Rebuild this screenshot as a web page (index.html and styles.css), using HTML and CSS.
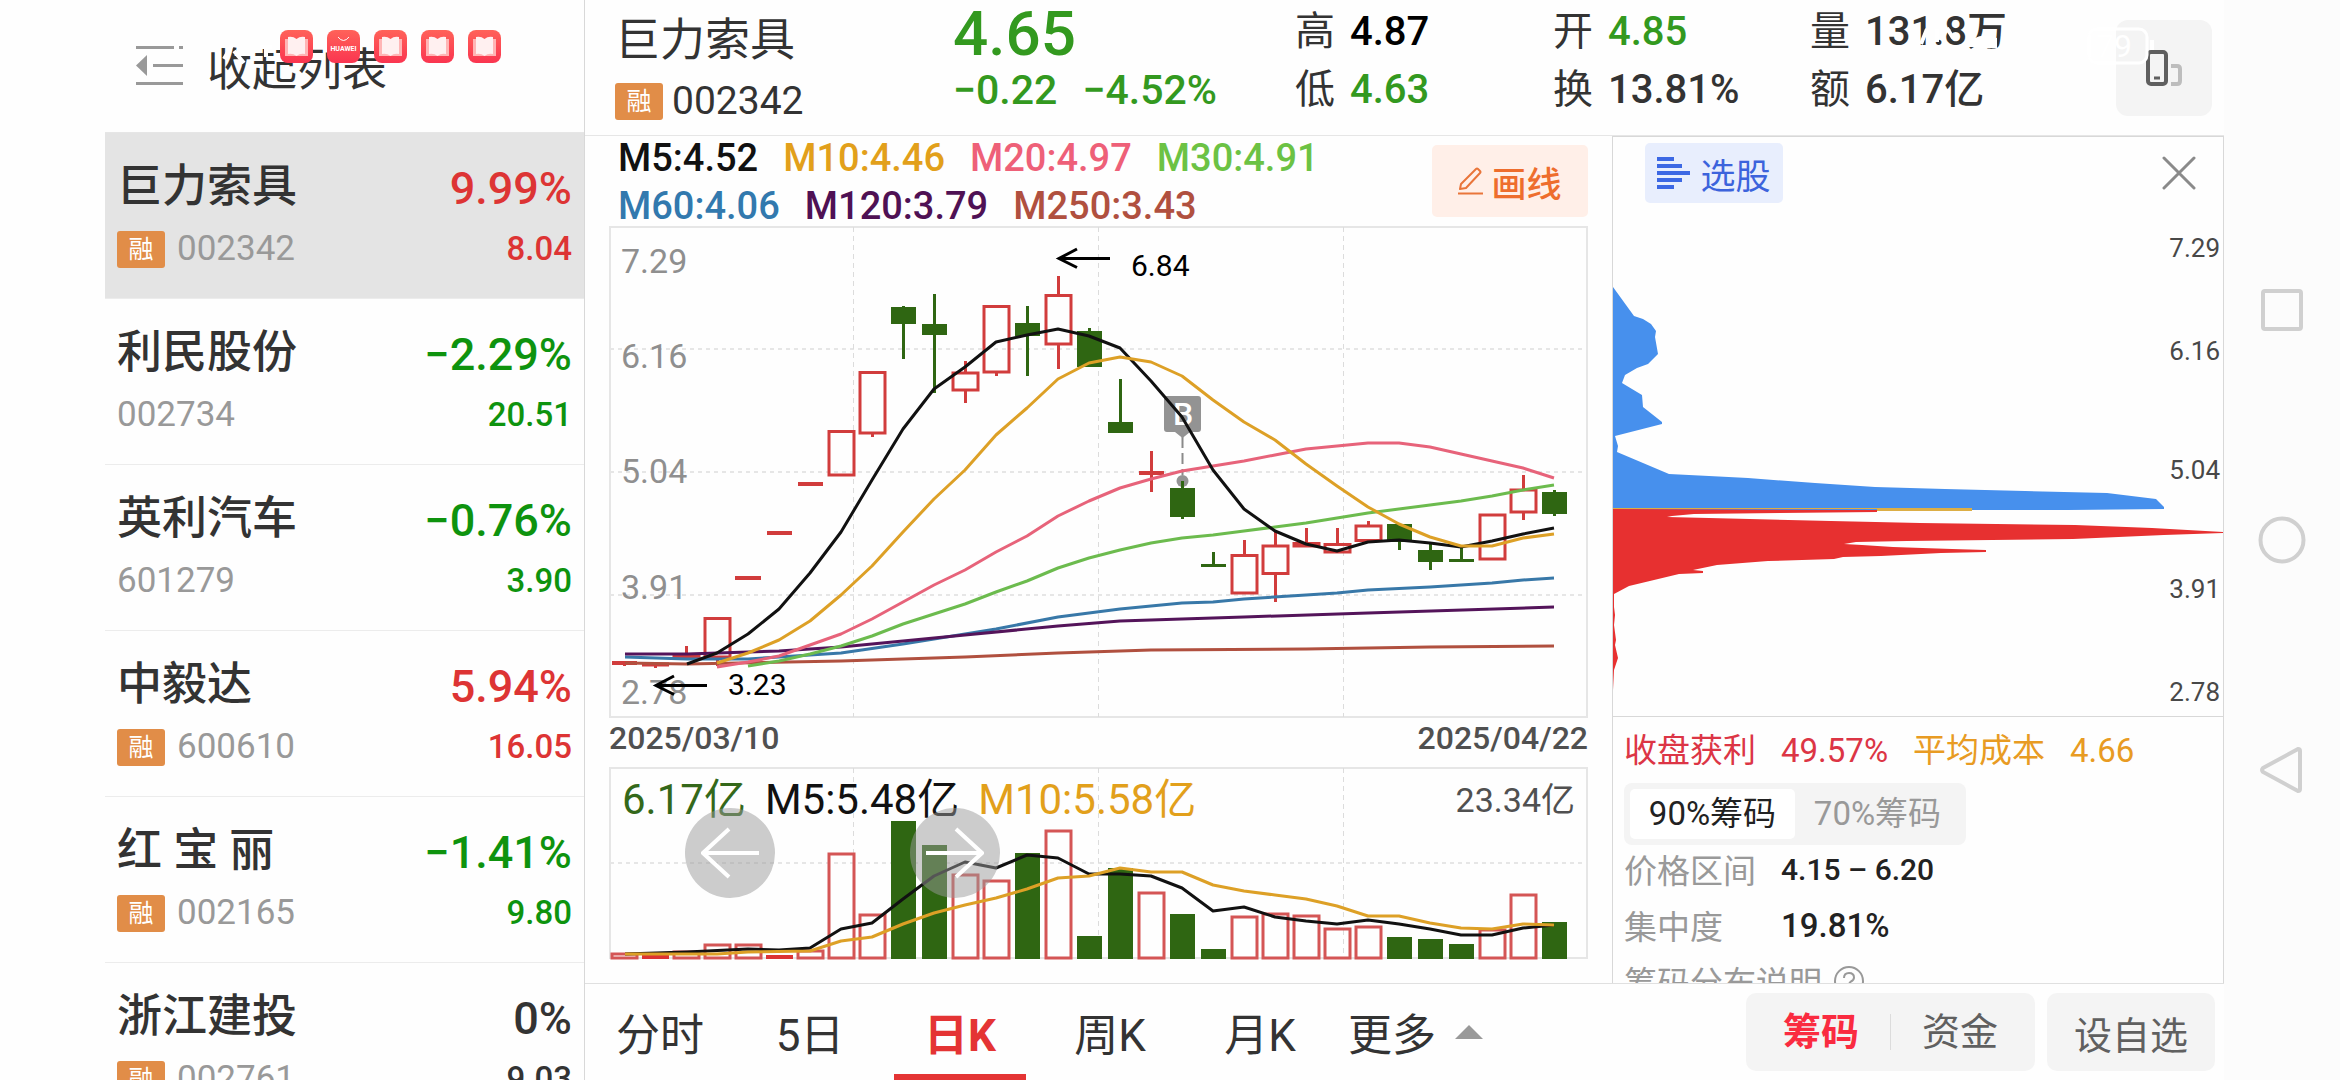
FILE: index.html
```html
<!DOCTYPE html>
<html lang="zh-CN">
<head>
<meta charset="utf-8">
<meta name="viewport" content="width=device-width, initial-scale=1">
<title>巨力索具 002342</title>
<link rel="stylesheet" href="styles.css">
</head>
<body>
<div class="app">
  <aside class="sidebar">
    <button class="collapse" type="button">
      <svg width="47" height="40" viewBox="0 0 47 40" aria-hidden="true"><path d="M0 1.500H38M43 1.500H47M17 19.500H47M0 37.500H47" stroke="#999" stroke-width="3"/><path d="M0 19.500L11 9V30Z" fill="#999"/></svg>
      <span>收起列表</span>
    </button>
    <ul class="stocks">
      <li><a class="stock selected" href="#002342"><span class="name">巨力索具</span><span class="change up">9.99%</span><span class="code"><i class="badge">融</i>002342</span><span class="price up">8.04</span></a></li>
      <li><a class="stock" href="#002734"><span class="name">利民股份</span><span class="change down">−2.29%</span><span class="code">002734</span><span class="price down">20.51</span></a></li>
      <li><a class="stock" href="#601279"><span class="name">英利汽车</span><span class="change down">−0.76%</span><span class="code">601279</span><span class="price down">3.90</span></a></li>
      <li><a class="stock" href="#600610"><span class="name">中毅达</span><span class="change up">5.94%</span><span class="code"><i class="badge">融</i>600610</span><span class="price up">16.05</span></a></li>
      <li><a class="stock" href="#002165"><span class="name">红 宝 丽</span><span class="change down">−1.41%</span><span class="code"><i class="badge">融</i>002165</span><span class="price down">9.80</span></a></li>
      <li><a class="stock" href="#002761"><span class="name">浙江建投</span><span class="change">0%</span><span class="code"><i class="badge">融</i>002761</span><span class="price">9.03</span></a></li>
    </ul>
  </aside>

  <main class="main">
    <header class="quote">
      <div class="identity">
        <h1>巨力索具</h1>
        <p><i class="badge">融</i>002342</p>
      </div>
      <div class="last">
        <strong>4.65</strong>
        <p><span>−0.22</span><span>−4.52%</span></p>
      </div>
      <dl class="stats">
        <div><dt>高</dt><dd class="black">4.87</dd></div>
        <div><dt>低</dt><dd class="fall">4.63</dd></div>
      </dl>
      <dl class="stats">
        <div><dt>开</dt><dd class="fall">4.85</dd></div>
        <div><dt>换</dt><dd>13.81%</dd></div>
      </dl>
      <dl class="stats">
        <div><dt>量</dt><dd>131.8万</dd></div>
        <div><dt>额</dt><dd>6.17亿</dd></div>
      </dl>
      <button class="rotate" type="button" aria-label="切换竖屏">
        <svg width="96" height="96" viewBox="0 0 96 96" fill="none" stroke-width="4" aria-hidden="true">
          <path d="M55 46H61Q64 46 64 49V61Q64 64 61 64H55" stroke="#bdbdbd"/>
          <rect x="32" y="32" width="18" height="32" rx="3" stroke="#5f5f5f"/><path d="M38 58H44" stroke="#5f5f5f" stroke-width="3"/>
        </svg>
      </button>
    </header>

    <section class="charts">
      <div class="averages">
        <div>
          <p><span class="m5">M5:4.52</span><span class="m10">M10:4.46</span><span class="m20">M20:4.97</span><span class="m30">M30:4.91</span></p>
          <p><span class="m60">M60:4.06</span><span class="m120">M120:3.79</span><span class="m250">M250:3.43</span></p>
        </div>
        <button class="draw" type="button">
          <svg width="25" height="28" viewBox="0 0 25 28" fill="none" stroke="#e9753a" stroke-width="2" aria-hidden="true"><path d="M3 17L18 2Q19 1 20 2L22 4Q23 5 22 6L8 21L2 22Z" stroke-linejoin="round"/><path d="M0 26.500H25"/></svg>
          <span>画线</span>
        </button>
      </div>

      <svg class="price-chart" viewBox="609 226 979 493" role="img" aria-label="日K线图">
        <g fill="none" stroke="#e6e6e6">
          <rect x="610" y="227" width="977" height="490" stroke-width="2"/>
          <path d="M610 349H1587M610 472H1587M610 595H1587" stroke-width="2" stroke-dasharray="4 4"/>
          <path d="M853.500 227V717M1098.500 227V717M1343.500 227V717" stroke-dasharray="5 4" stroke="#dcdcdc"/>
        </g>
        <g class="axis">
          <text x="621" y="273">7.29</text><text x="621" y="368">6.16</text><text x="621" y="483">5.04</text><text x="621" y="599">3.91</text><text x="621" y="704">2.78</text>
        </g>
        <g stroke="#d13c3c" stroke-width="3" fill="none">
          <path stroke-width="4" d="M612 663H637M642 664.500H669M735 578H761M767 533H792M798 484H823M1139 473H1164"/>
          <path d="M624.500 663V666M655.500 664V668M686.500 646V656M717.500 657V666M872.500 433V437M965.500 361V373M965.500 390V403M996.500 372V376M1058.500 276V295M1058.500 344V369M1151.500 451V492M1244.500 540V555M1275.500 532V546M1275.500 573V602M1306.500 528V544M1337.500 528V544M1368.500 521V526M1523.500 475V490M1523.500 512V520"/>
          <path d="M674 655.500H699V657H674ZM705 618.500H730V657H705ZM829 431.500H854V475H829ZM860 372.500H885V433H860ZM953 373H978V390H953ZM984 306.500H1009V372H984ZM1046 295.500H1071V344H1046ZM1232 555.500H1257V593H1232ZM1263 546H1288V573.500H1263ZM1294 543.500H1319V546H1294ZM1325 544.500H1350V552H1325ZM1356 526H1381V540.500H1356ZM1480 515H1505V559H1480ZM1511 490H1536V512H1511Z"/>
        </g>
        <g fill="#2f6612">
          <path d="M891 307H916V324H891ZM922 324H947V335H922ZM1015 323H1040V336H1015ZM1077 331H1102V367H1077ZM1108 422H1133V433H1108ZM1170 488H1195V517H1170ZM1201 564H1226V567H1201ZM1387 524H1412V542H1387ZM1418 550H1443V562H1418ZM1449 559H1474V562H1449ZM1542 492H1567V514H1542Z"/>
          <path d="M902 306H905V359H902ZM933 294H936V393H933ZM1026 306H1029V376H1026ZM1088 328H1091V340H1088ZM1119 379H1122V425H1119ZM1212 552H1215V565H1212ZM1398 540H1401V550H1398ZM1429 544H1432V570H1429ZM1460 547H1463V562H1460ZM1553 490H1556V516H1553Z"/>
        </g>
        <path d="M1182.500 437V475" stroke="#8a8a8a" stroke-width="2" stroke-dasharray="11 5"/>
        <circle cx="1182.500" cy="481" r="6" fill="#939393"/>
        <path d="M1181 481H1184V519H1181Z" fill="#2f6612"/>
        <path d="M1167 396H1198Q1201 396 1201 399V429Q1201 432 1198 432H1190L1182.500 438L1175 432H1167Q1164 432 1164 429V399Q1164 396 1167 396Z" fill="#939393"/>
        <text class="marker" x="1183" y="425" text-anchor="middle">B</text>
        <g class="lines">
          <path stroke="#b0503f" d="M625 663L687 664L841 661L965 657L1058 653L1151 650L1306 649L1430 647L1554 646"/>
          <path stroke="#3878a8" d="M625 657L687 659L748 659L779 657L841 653L903 644L965 634L996 629L1058 617L1120 609L1182 603L1213 602L1244 599L1306 595L1337 593L1368 590L1430 587L1492 583L1523 580L1554 578"/>
          <path stroke="#54145a" d="M625 654H687L779 651L841 647L903 641L965 635L1058 626L1120 621L1244 617L1368 613L1554 607"/>
          <path stroke="#6cbb4e" d="M748 666L779 661L810 654L841 646L872 636L903 624L934 614L965 604L996 592L1027 581L1058 568L1089 558L1120 550L1151 543L1182 538L1213 535L1244 531L1275 527L1306 523L1337 518L1368 513L1399 509L1430 505L1461 501L1492 496L1523 490L1554 485"/>
          <path stroke="#e7637a" d="M717 667L748 662L779 656L810 645L841 634L872 619L903 602L934 585L965 570L996 552L1027 536L1058 516L1089 501L1120 488L1151 479L1182 471L1213 466L1244 461L1275 455L1306 449L1337 446L1368 443H1399L1430 447L1461 454L1492 461L1523 468L1554 478"/>
          <path stroke="#111" d="M687 664L717 653L748 634L779 609L810 573L841 532L872 480L903 429L934 389L965 367L996 342L1027 335L1058 329L1089 336L1120 348L1151 381L1182 417L1213 470L1244 509L1275 531L1306 544L1337 551L1368 542L1399 540L1430 543L1461 547L1492 541L1523 534L1554 528"/>
          <path stroke="#dda026" d="M717 663L748 653L779 640L810 621L841 595L872 566L903 532L934 499L965 470L996 435L1027 408L1058 379L1089 363L1120 357L1151 362L1182 376L1213 400L1244 422L1275 440L1306 464L1337 486L1368 507L1399 524L1430 537L1461 546H1492L1523 538L1554 534"/>
        </g>
        <g fill="none" stroke="#000" stroke-width="3"><path d="M1059 258.500H1110M1077 249L1059 258.500L1077 267.500"/><path d="M656 685.500H707M674 676L656 685.500L674 694.500"/></g>
        <g class="extreme"><text x="1131" y="276">6.84</text><text x="728" y="695">3.23</text></g>
      </svg>

      <div class="dates"><time datetime="2025-03-10">2025/03/10</time><time datetime="2025-04-22">2025/04/22</time></div>

      <div class="volume">
        <svg viewBox="609 766 979 196" role="img" aria-label="成交额">
          <g fill="none" stroke="#e6e6e6">
            <rect x="610" y="768" width="977" height="190" stroke-width="2"/>
            <path d="M610 863H1587" stroke-width="2" stroke-dasharray="4 4"/>
            <path d="M853.500 768V958M1098.500 768V958M1343.500 768V958" stroke-dasharray="5 4" stroke="#dcdcdc"/>
          </g>
          <g fill="#2f6612"><path d="M891 821H916V959H891ZM922 845H947V959H922ZM1015 853H1040V959H1015ZM1077 936H1102V959H1077ZM1108 868H1133V959H1108ZM1170 914H1195V959H1170ZM1201 949H1226V959H1201ZM1387 937H1412V959H1387ZM1418 939H1443V959H1418ZM1449 944H1474V959H1449ZM1542 922H1567V959H1542Z"/></g>
          <g fill="none" stroke="#d45555" stroke-width="3">
            <path stroke="#dc3333" stroke-width="4" d="M642 957H669M766 957H793"/>
            <path d="M612 954H637V958H612ZM674 952H699V958H674ZM705 945H730V958H705ZM736 945H761V958H736ZM798 951H823V958H798ZM829 854H854V958H829ZM860 915H885V958H860ZM953 875H978V958H953ZM984 881H1009V958H984ZM1046 831H1071V958H1046ZM1139 893H1164V958H1139ZM1232 917H1257V958H1232ZM1263 914H1288V958H1263ZM1294 916H1319V958H1294ZM1325 929H1350V958H1325ZM1356 927H1381V958H1356ZM1480 930H1505V958H1480ZM1511 895H1536V958H1511Z"/>
          </g>
          <g class="lines">
            <path stroke="#111" d="M625 954L687 952L748 949L779 950L810 948L841 929L872 923L903 899L934 876L965 862L996 868L1027 855L1058 858L1089 874H1120L1151 876L1182 888L1213 911L1244 907L1275 917L1306 921L1337 924L1368 920L1399 924L1430 929L1461 935H1492L1523 928L1554 925"/>
            <path stroke="#dda026" d="M625 954H717L748 952L810 951L841 941L872 937L903 924L934 913L965 905L996 898L1027 889L1058 878L1089 876L1120 868L1151 872H1182L1213 885L1244 891L1275 895L1306 899L1337 906L1368 916H1399L1430 923L1461 928L1492 929L1523 924L1554 925"/>
          </g>
        </svg>
        <div class="volume-legend"><span class="dark-green">6.17亿</span><span class="m5">M5:5.48亿</span><span class="m10">M10:5.58亿</span><span class="peak">23.34亿</span></div>
        <button class="pan pan-left" type="button" aria-label="向左"><svg width="58" height="52" viewBox="0 0 58 52" aria-hidden="true"><path d="M58 26H2M28 2L2 26L28 50"/></svg></button>
        <button class="pan pan-right" type="button" aria-label="向右"><svg width="58" height="52" viewBox="0 0 58 52" aria-hidden="true"><path d="M0 26H56M30 2L56 26L30 50"/></svg></button>
      </div>
    </section>

    <section class="chips">
      <div class="chips-head">
        <button class="pick" type="button">
          <svg width="33" height="32" viewBox="0 0 33 32" aria-hidden="true"><path d="M0 0H17V4H0ZM0 7H25V11H0ZM0 14H33V18H0ZM0 21H25V25H0ZM0 28H17V32H0Z" fill="#3c68e4"/></svg>
          <span>选股</span>
        </button>
        <button class="close" type="button" aria-label="关闭"><svg width="34" height="34" viewBox="0 0 34 34" aria-hidden="true"><path d="M2 2L32 32M32 2L2 32" stroke="#8a8a8a" stroke-width="3" stroke-linecap="round"/></svg></button>
      </div>
      <svg class="chip-chart" viewBox="1613 226 610 490" role="img" aria-label="筹码分布">
        <path fill="#4790ed" d="M1613 287L1634 316L1643 319L1651 324L1656 331L1655 337L1658 354L1648 364L1637 368L1625 375L1622 383L1642 395L1643 407L1662 422V424L1615 436L1618 446L1617 452L1669 474L1709 476L1748 478L1815 483L1875 487L1945 489L2025 491L2107 493L2156 499L2164 507V509L2068 510H1613Z"/>
        <path fill="#e73030" d="M1613 509L1877 510V512L1780 513L1694 514L1672 516L1667 517L1709 518L1831 521L1920 523L2075 525L2152 528L2223 532V533L2164 535L2073 539L1907 541L1856 542L1844 544L1862 545L1893 547L1952 549L1986 550V552L1941 553L1881 556L1843 557L1834 559L1768 561L1717 565L1693 570L1703 571V573L1679 574L1629 586L1614 594V607L1615 615L1614 625L1616 640L1615 645L1618 658L1614 670L1613 690Z"/>
        <path fill="#dcae45" d="M1877 508H1972V511H1877ZM1613 508H1877V509H1613Z"/>
        <g class="chip-axis" text-anchor="end"><text x="2220" y="257">7.29</text><text x="2220" y="360">6.16</text><text x="2220" y="479">5.04</text><text x="2220" y="598">3.91</text><text x="2220" y="701">2.78</text></g>
      </svg>
      <div class="chip-info">
        <p class="profit"><span class="crimson">收盘获利</span><span class="crimson">49.57%</span><span class="amber">平均成本</span><span class="amber">4.66</span></p>
        <div class="segment" role="radiogroup" aria-label="筹码范围">
          <label><input type="radio" name="range" checked><span>90%筹码</span></label>
          <label><input type="radio" name="range"><span>70%筹码</span></label>
        </div>
        <dl class="facts">
          <div><dt>价格区间</dt><dd class="range">4.15 – 6.20</dd></div>
          <div><dt>集中度</dt><dd>19.81%</dd></div>
        </dl>
        <a class="help" href="#help">筹码分布说明 <svg width="30" height="30" viewBox="0 0 30 30" fill="none" stroke="#999" stroke-width="2" aria-hidden="true"><circle cx="15" cy="15" r="14"/><path d="M10 12Q10 7 15 7Q20 7 20 11.500Q20 14 17 15.500Q15 17 15 19M15 22V24"/></svg></a>
      </div>
    </section>

    <footer class="bottom">
      <nav class="tabs">
        <button type="button">分时</button><button type="button">5日</button><button type="button" class="active">日K</button><button type="button">周K</button><button type="button">月K</button><button type="button" class="more">更多<svg width="28" height="14" viewBox="0 0 28 14" aria-hidden="true"><path d="M0 14L14 0L28 14Z" fill="#999"/></svg></button>
      </nav>
      <div class="pair"><button type="button" class="on">筹码</button><button type="button">资金</button></div>
      <button class="favourite" type="button">设自选</button>
    </footer>
  </main>

  <nav class="system-nav" aria-label="系统导航">
    <button type="button" aria-label="最近任务"><svg width="48" height="48" viewBox="0 0 48 48"><rect x="5" y="5" width="38" height="38" rx="2"/></svg></button>
    <button type="button" aria-label="主屏幕"><svg width="48" height="48" viewBox="0 0 48 48"><circle cx="24" cy="24" r="21.500"/></svg></button>
    <button type="button" aria-label="返回"><svg width="48" height="48" viewBox="0 0 48 48"><path d="M5 22L40 3Q42 3 42 5V43Q42 45 40 45L5 26Q3 24 5 22Z"/></svg></button>
  </nav>

  <svg class="status-left" width="300" height="40" viewBox="0 0 300 40" aria-hidden="true">
    <defs>
      <linearGradient id="red" x1="0" y1="0" x2="0" y2="1"><stop offset="0" stop-color="#ff6259"/><stop offset="1" stop-color="#fa3550"/></linearGradient>
      <symbol id="book" viewBox="0 0 33 33"><rect width="33" height="33" rx="8" fill="url(#red)"/><path d="M5 9H28V26H5Z" fill="#ffb5b5"/><path d="M8 7Q13 6 16.500 9Q20 6 25 7V24Q20 23 16.500 26Q13 23 8 24Z" fill="#fff0f0"/></symbol>
    </defs>
    <path d="M22 16L14 30M24 22L34 34M50 18H62M56 20V28" stroke="#fff" stroke-width="4"/>
    <use href="#book" x="70" y="1" width="33" height="33"/>
    <rect x="117" y="1" width="33" height="33" rx="8" fill="url(#red)"/><path d="M128 8Q133.500 15 139 8" fill="none" stroke="#fff" stroke-width="1"/><text class="brand" x="133.500" y="22" text-anchor="middle">HUAWEI</text>
    <use href="#book" x="164" y="1" width="33" height="33"/><use href="#book" x="211" y="1" width="33" height="33"/><use href="#book" x="258" y="1" width="33" height="33"/>
  </svg>
  <svg class="status-right" width="250" height="44" viewBox="0 0 250 44" aria-hidden="true">
    <g fill="none" stroke="#fff" stroke-width="4"><path d="M16 5L10 20M26 18V5M36 4L42 14"/></g>
    <path d="M54 23Q66 6 86 14V18L72 23ZM72 23L86 18V24H66Z" fill="#fff"/>
    <rect x="178" y="5" width="58" height="34" rx="8" fill="none" stroke="#fff" stroke-width="3"/><path d="M241 16V26" stroke="#fff" stroke-width="4"/>
    <text class="battery" x="221" y="33" text-anchor="end">79</text>
  </svg>
</div>
</body>
</html>
```

FILE: styles.css
```css
* { box-sizing: border-box; margin: 0; padding: 0; }

body {
  background: #fefefe;
  color: #333;
  font-family: Roboto, "Noto Sans CJK SC", sans-serif;
}

button { border: 0; background: none; color: inherit; font: inherit; white-space: nowrap; cursor: pointer; }
a { color: inherit; text-decoration: none; }
ul { list-style: none; }
svg { display: block; flex: none; }
i { font-style: normal; }

.app {
  position: relative;
  display: grid;
  grid-template-columns: 480px minmax(0, 1fr) 116px;
  grid-template-rows: minmax(0, 1fr);
  height: 100vh;
  padding-left: 105px;
  overflow: hidden;
}

.up { color: #dd3434; }
.down { color: #0e930e; }
.fall { color: #33991f; }
.black { color: #000; }

/* stock list */
.sidebar { border-right: 1px solid #d8d8d8; overflow: hidden; }

.collapse {
  display: flex;
  align-items: center;
  gap: 24px;
  width: 100%;
  height: 133px;
  padding: 0 31px;
  border-bottom: 1px solid #e6e6e6;
  font-size: 45px;
}

.stock {
  display: grid;
  grid-template-columns: 1fr auto;
  grid-template-rows: 54px 50px;
  align-items: center;
  row-gap: 10px;
  height: 166px;
  padding: 27px 12px 0;
  align-content: start;
  border-bottom: 1px solid #ececec;
}
.stock.selected { background: #e4e4e4; }
.name { font-size: 45px; line-height: 50px; font-weight: 500; }
.change { align-self: end; font-size: 45px; line-height: 50px; font-weight: 500; text-align: right; }
.code { display: flex; align-items: center; gap: 12px; color: #999; font-size: 35px; line-height: 50px; }
.price { font-size: 33px; line-height: 50px; font-weight: 500; text-align: right; }

.badge {
  display: inline-block;
  width: 48px;
  border-radius: 3px;
  background: #e18d48;
  color: #fff;
  font-size: 25px;
  line-height: 37px;
  text-align: center;
}

/* main area */
.main {
  display: grid;
  grid-template-columns: minmax(0, 1fr) 612px;
  grid-template-rows: 136px minmax(0, 1fr) 97px;
}

.quote {
  grid-column: 1 / -1;
  display: grid;
  grid-template-columns: 338fr 342fr 258fr 257fr 306fr 96px;
  padding: 0 12px 0 30px;
  border-bottom: 1px solid #e6e6e6;
  white-space: nowrap;
}
.identity { padding-top: 16px; }
.identity h1 { font-size: 45px; line-height: 50px; font-weight: 400; }
.identity p { display: flex; align-items: center; gap: 9px; padding-top: 10px; font-size: 39px; line-height: 50px; }
.last { color: #33991f; font-weight: 500; }
.last strong { display: block; font-size: 62px; line-height: 68px; font-weight: 500; }
.last p { display: flex; gap: 25px; font-size: 41px; line-height: 44px; }
.stats div { display: flex; align-items: center; gap: 15px; font-size: 40px; line-height: 58px; }
.stats { padding-top: 3px; }
.stats dd { font-weight: 500; }
.rotate { align-self: center; height: 96px; border-radius: 12px; background: #f4f4f4; }

.charts { padding: 0 24px; min-height: 0; }
.averages { display: flex; justify-content: space-between; align-items: center; height: 90px; }
.averages div { display: grid; row-gap: 6px; padding: 2px 0 0 9px; }
.averages p { display: flex; gap: 25px; font-size: 38px; line-height: 42px; font-weight: 500; white-space: nowrap; }
.m5 { color: #111; }
.m10 { color: #e2a01b; }
.m20 { color: #ee6078; }
.m30 { color: #6cc244; }
.m60 { color: #3279ae; }
.m120 { color: #4f1154; }
.m250 { color: #b0503f; }
.draw {
  display: flex;
  align-items: center;
  justify-content: center;
  gap: 8px;
  width: 156px;
  height: 72px;
  border-radius: 5px;
  background: #ffefe8;
  color: #ee6d2d;
  font-size: 35px;
  font-weight: 500;
}

.price-chart, .volume svg[role], .chip-chart { width: 100%; height: auto; }
.axis { fill: #8f8f8f; font-size: 34px; }
.extreme { fill: #000; font-size: 30px; }
.marker { fill: #fff; font-size: 32px; font-weight: 500; }
.lines { fill: none; stroke-width: 3; stroke-linejoin: round; }

.dates { display: flex; justify-content: space-between; height: 47px; color: #505050; font-size: 32px; line-height: 38px; font-weight: 500; }

.volume { position: relative; }
.volume-legend {
  position: absolute;
  top: 10px;
  left: 13px;
  right: 13px;
  display: flex;
  gap: 19px;
  font-size: 42px;
  line-height: 48px;
  white-space: nowrap;
}
.dark-green { color: #34681a; }
.peak { margin-left: auto; color: #505050; font-size: 34px; }
.pan {
  position: absolute;
  top: 42px;
  display: grid;
  place-items: center;
  width: 90px;
  height: 90px;
  border-radius: 50%;
  background: rgba(153, 153, 153, 0.5);
}
.pan-left { left: 76px; }
.pan-right { left: 301px; }
.pan path { fill: none; stroke: #fff; stroke-width: 4; }

/* chip distribution */
.chips { display: flex; flex-direction: column; min-height: 0; border: 1px solid #d8d8d8; border-bottom: 0; overflow: hidden; }
.chips-head { flex: none; display: flex; justify-content: space-between; align-items: flex-start; height: 89px; padding: 6px 27px 0 32px; }
.pick {
  display: flex;
  align-items: center;
  justify-content: center;
  gap: 10px;
  width: 138px;
  height: 60px;
  border-radius: 5px;
  background: #e8eefd;
  color: #3c63dc;
  font-size: 35px;
}
.close { padding: 13px 0; }
.chip-chart { border-bottom: 1px solid #d8d8d8; }
.chip-axis { fill: #484848; font-size: 26px; }

.chip-info { flex: none; padding: 10px 11px 0; font-size: 33px; white-space: nowrap; }
.profit { display: flex; gap: 25px; line-height: 48px; }
.crimson { color: #dc3545; }
.amber { color: #e89b23; }
.segment { display: flex; width: max-content; height: 62px; margin-top: 8px; padding: 6px; border-radius: 8px; background: #f4f4f4; }
.segment label { position: relative; }
.segment input { position: absolute; opacity: 0; }
.segment span { display: block; width: 165px; border-radius: 5px; color: #999; line-height: 50px; text-align: center; }
.segment input:checked + span { background: #fff; color: #222; }
.facts { margin-top: -4px; }
.facts div { display: flex; align-items: center; height: 56px; }
.facts dt { width: 157px; color: #999; }
.facts dd { color: #222; font-weight: 500; }
.facts .range { font-size: 30px; }
.help { display: flex; align-items: center; gap: 12px; height: 56px; color: #999; }

/* bottom bar */
.bottom { grid-column: 1 / -1; display: flex; align-items: center; gap: 12px; padding-right: 9px; border-top: 1px solid #e0e0e0; font-size: 44px; }
.tabs { display: flex; align-self: stretch; margin-right: auto; }
.tabs button { position: relative; width: 150px; }
.tabs .active { color: #e43434; font-weight: 700; }
.tabs .active::after { content: ""; position: absolute; left: 9px; right: 9px; bottom: 0; height: 6px; background: #e43434; }
.tabs .more { display: flex; align-items: center; gap: 19px; padding-left: 13px; }
.pair, .favourite { height: 78px; border-radius: 10px; background: #f4f4f4; color: #606060; font-size: 38px; }
.pair { display: flex; align-items: center; width: 289px; padding: 0 6px; }
.pair button { flex: 1; height: 36px; line-height: 36px; }
.pair button + button { border-left: 1px solid #dcdcdc; }
.pair .on { color: #fa2b40; font-weight: 700; }
.favourite { width: 168px; }

/* phone navigation and status icons */
.system-nav { display: flex; flex-direction: column; align-items: center; justify-content: center; gap: 182px; background: #fcfcfc; }
.system-nav svg { fill: none; stroke: #d0d0d0; stroke-width: 4; }
.status-left { position: absolute; top: 29px; left: 210px; pointer-events: none; }
.status-right { position: absolute; top: 24px; right: 179px; pointer-events: none; }
.brand { fill: #fff; font-size: 7px; font-weight: 700; }
.battery { fill: #fff; font-size: 32px; }
```
